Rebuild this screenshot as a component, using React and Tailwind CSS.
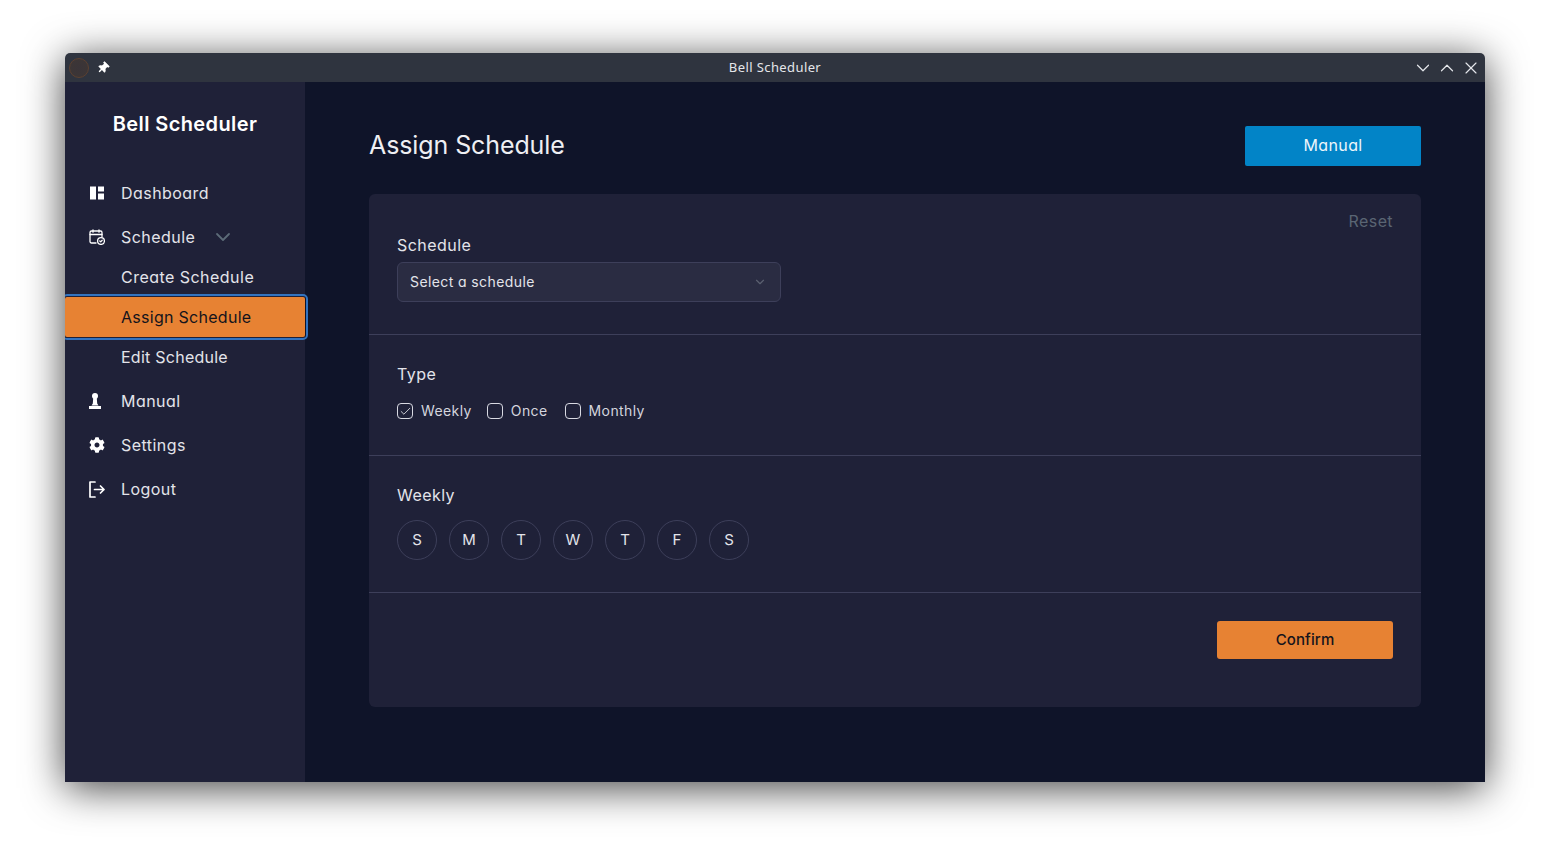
import React from 'react';
import { FaCog, FaThumbtack } from 'react-icons/fa';
import { ChevronDown, ChevronUp, X, Check } from 'lucide-react';

const DashboardIcon = () => (
  <svg width="14" height="14" viewBox="0 0 14 14" fill="#fff">
    <rect x="0" y="0.5" width="6" height="13" />
    <rect x="8" y="0.5" width="6" height="5" />
    <rect x="8" y="7.5" width="6" height="6" />
  </svg>
);

const CalendarIcon = () => (
  <svg width="16" height="16" viewBox="0 0 16 16" fill="none" stroke="#fff" strokeWidth="1.3" strokeLinecap="round" strokeLinejoin="round">
    <path d="M7 14H2.500A1.500 1.500 0 0 1 1 12.500V3.500A1.500 1.500 0 0 1 2.500 2h9A1.500 1.500 0 0 1 13 3.500V8" />
    <path d="M1 5.500h12M4 .8v2.400M10 .8v2.400" />
    <circle cx="12" cy="12" r="3.400" />
    <path d="M10.800 12l.9.9 1.500-1.600" />
  </svg>
);

const ManualIcon = () => (
  <svg width="12" height="16" viewBox="0 0 12 16" fill="#fff" className="-translate-x-[2px]">
    <circle cx="6" cy="3" r="3" />
    <path d="M4.300 4h3.400l.5 6.500 1.300 2H2.500l1.300-2z" />
    <rect x="0" y="13" width="12" height="3" />
  </svg>
);

const LogoutIcon = () => (
  <svg width="16" height="17" viewBox="0 0 16 17" fill="none" stroke="#fff" strokeWidth="1.700" strokeLinecap="round" strokeLinejoin="round">
    <path d="M6 1H1v15h5" />
    <path d="M5.500 8.500h9.500M11.500 5 15 8.500 11.500 12" />
  </svg>
);

const NavItem = ({ icon, label, children }) => (
  <div className="flex h-10 items-center pl-6 text-[#e3e4ea]">
    <span className="flex w-[16px] justify-center">{icon}</span>
    <span className="ml-4 tracking-[0.45px]">{label}</span>
    {children}
  </div>
);

const SubItem = ({ label, active, className }) => (
  <div
    className={
      active
        ? 'relative flex h-10 items-center rounded-[2px] bg-[#e78233] pl-14 text-[#14141c] outline-2 outline-offset-1 outline-[#3373bf]'
        : 'flex h-10 items-center pl-14 text-[#e3e4ea]'
    }
  >
    <span className={className}>{label}</span>
  </div>
);

const TypeCheck = ({ label, checked, className }) => (
  <label className={`flex items-center gap-2 ${className}`}>
    <span className="flex h-4 w-4 items-center justify-center rounded-[4px] border border-[#d8d9e2]">
      {checked && <Check size={13} strokeWidth={1.6} color="#e3e4ea" />}
    </span>
    <span className="pb-[2px] text-[14px] tracking-[0.4px] text-[#d4d5de]">{label}</span>
  </label>
);

const days = ['S', 'M', 'T', 'W', 'T', 'F', 'S'];

export default function App() {
  return (
    <div className="h-[859px] w-full overflow-hidden bg-white pl-[65px] pt-[53px] [font-family:Inter,sans-serif] [font-feature-settings:'cv11']">
      <div className="flex h-[729px] w-[1420px] flex-col overflow-hidden rounded-t-[5px] shadow-[0_6px_40px_rgba(0,0,0,0.75)]">
        <div className="grid h-[29px] shrink-0 grid-cols-3 items-center bg-[#2f343f] px-[2px]">
          <div className="flex items-center pl-[2px]">
            <span className="h-5 w-5 rounded-full border border-[#5c4030] bg-[radial-gradient(circle,#3a3438,#3d3635)]" />
            <FaThumbtack size={12} color="#fff" className="ml-[8px] rotate-45" />
          </div>
          <span className="text-center text-[13px] tracking-[0.4px] text-[#e4e6ea] [font-family:'Noto_Sans',sans-serif]">
            Bell Scheduler
          </span>
          <div className="flex items-center justify-end">
            <span className="flex w-6 justify-center"><ChevronDown size={22} strokeWidth={1.3} color="#e4e6ea" /></span>
            <span className="flex w-6 justify-center"><ChevronUp size={22} strokeWidth={1.3} color="#e4e6ea" /></span>
            <span className="flex w-6 justify-center"><X size={20} strokeWidth={1.4} color="#e4e6ea" /></span>
          </div>
        </div>

        <div className="flex min-h-0 flex-1">
          <aside className="relative z-10 w-[240px] shrink-0 bg-[#1f2138]">
            <h1 className="mb-[35px] mt-[28px] text-center text-[20px] font-semibold leading-7 tracking-[0.4px] text-white">
              Bell Scheduler
            </h1>
            <nav className="flex flex-col gap-1">
              <NavItem icon={<DashboardIcon />} label="Dashboard" />
              <div>
                <NavItem icon={<CalendarIcon />} label="Schedule">
                  <ChevronDown size={24} strokeWidth={1.8} color="#5c6b78" className="ml-[16px]" />
                </NavItem>
                <SubItem label="Create Schedule" className="tracking-[0.47px]" />
                <SubItem label="Assign Schedule" className="tracking-[0.28px]" active />
                <SubItem label="Edit Schedule" className="tracking-[0.25px]" />
              </div>
              <NavItem icon={<ManualIcon />} label="Manual" />
              <NavItem icon={<FaCog size={16} color="#fff" />} label="Settings" />
              <NavItem icon={<LogoutIcon />} label="Logout" />
            </nav>
          </aside>

          <main className="flex-1 bg-[#0f1429] px-16 pt-11">
            <div className="mb-7 flex h-10 items-center justify-between">
              <h2 className="text-[25px] tracking-[-0.1px] text-[#eeeff3]">Assign Schedule</h2>
              <button className="h-10 w-44 rounded-[2px] bg-[#0284c7] pb-[2px] tracking-[0.4px] text-[#eef6fb]">Manual</button>
            </div>

            <div className="rounded-[6px] bg-[#1f2138]">
              <section className="border-b border-[#3d3f5a] px-7 pb-8 pt-[15px]">
                <div className="flex h-6 items-center justify-end tracking-[0.4px] text-[#5a6573]">Reset</div>
                <div className="mb-[5px] h-6 leading-6 tracking-[0.45px] text-[#e3e4ea]">Schedule</div>
                <div className="flex h-10 w-96 items-center justify-between rounded-[6px] border border-[#3d3f5a] bg-[#2a2c42] pl-3 pr-[13px] text-[14px] tracking-[0.4px] text-[#e3e4ea]">
                  <span className="pb-[2px]">Select a schedule</span>
                  <ChevronDown size={14} color="#5b6070" />
                </div>
              </section>

              <section className="border-b border-[#3d3f5a] px-7 pb-8 pt-[27px]">
                <div className="h-6 leading-6 tracking-[0.45px] text-[#e3e4ea]">Type</div>
                <div className="mt-[13px] flex h-6 items-center gap-4">
                  <TypeCheck label="Weekly" checked />
                  <TypeCheck label="Once" className="-ml-px" />
                  <TypeCheck label="Monthly" className="ml-px" />
                </div>
              </section>

              <section className="border-b border-[#3d3f5a] px-7 pb-8 pt-[27px]">
                <div className="h-6 leading-6 tracking-[0.45px] text-[#e3e4ea]">Weekly</div>
                <div className="mt-[13px] flex gap-3">
                  {days.map((d, i) => (
                    <div
                      key={i}
                      className="flex h-10 w-10 items-center justify-center rounded-full border border-[#3d3f5a] text-[15px] text-[#e3e4ea]"
                    >
                      {d}
                    </div>
                  ))}
                </div>
              </section>

              <div className="flex justify-end px-7 pb-12 pt-7">
                <button className="h-[38px] w-44 rounded-[3px] bg-[#e78233] pt-px text-[15px] font-medium tracking-[0.1px] text-[#14141c]">
                  Confirm
                </button>
              </div>
            </div>
          </main>
        </div>
      </div>
    </div>
  );
}
